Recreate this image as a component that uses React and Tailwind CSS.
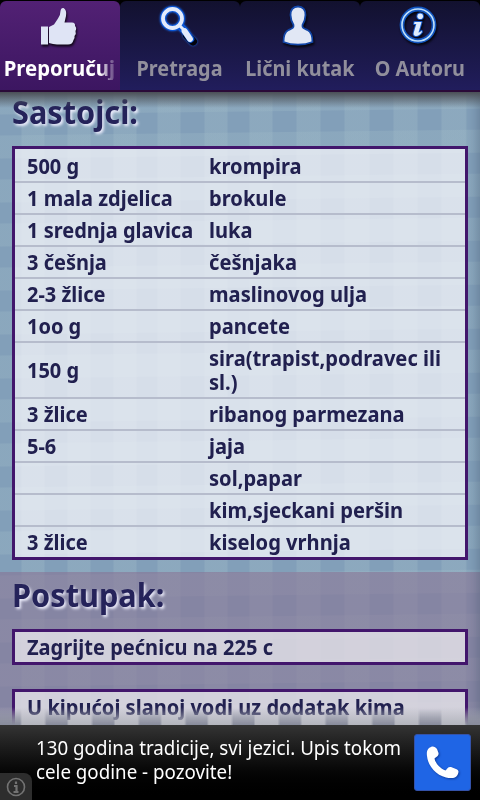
const ingredients = [
  ["500 g", "krompira"],
  ["1 mala zdjelica", "brokule"],
  ["1 srednja glavica", "luka"],
  ["3 češnja", "češnjaka"],
  ["2-3 žlice", "maslinovog ulja"],
  ["1oo g", "pancete"],
  ["150 g", "sira(trapist,podravec ili sl.)"],
  ["3 žlice", "ribanog parmezana"],
  ["5-6", "jaja"],
  ["", "sol,papar"],
  ["", "kim,sjeckani peršin"],
  ["3 žlice", "kiselog vrhnja"],
];

function ThumbIcon() {
  return (
    <svg className="h-[48px] w-[48px] drop-shadow-[1px_2px_1px_rgba(0,0,0,0.8)]" viewBox="0 0 48 48" fill="#dfe4f5">
      <path d="M5 26.500H12V44.500H5Z" />
      <path d="M13 27L18 24.500L22 18.500Q24.500 15 24.500 11Q25 7.500 27.500 8Q31 10 30 16L28.500 22.500H36Q39.500 22.500 39 26Q41 28 39.500 31Q40.500 33.500 38.500 36Q39 38.500 37.500 40Q36.500 44.500 32 44.500H21Q17 44 13 43Z" />
    </svg>
  );
}

function SearchIcon() {
  return (
    <svg className="h-[48px] w-[48px] -translate-x-[5px] drop-shadow-[0_0_1px_#1769ee]" viewBox="0 0 48 48" fill="none" strokeLinecap="round">
      <path d="M35 34L41 40" stroke="#02030c" strokeWidth="8" transform="translate(1 1.5)" />
      <circle cx="21.5" cy="18.5" r="9.5" stroke="#0b56d5" strokeWidth="6" />
      <path d="M29 26L32 29M34 31L39.500 39" stroke="#0b56d5" strokeWidth="7.500" />
      <circle cx="21.500" cy="18.500" r="9.500" stroke="#e3ebfb" strokeWidth="3.800" />
      <path d="M28.500 25.500L32 29" stroke="#e3ebfb" strokeWidth="3" />
      <path d="M33.500 31L39 39" stroke="#e3ebfb" strokeWidth="5.800" />
    </svg>
  );
}

function PersonIcon() {
  return (
    <svg className="h-[48px] w-[48px] drop-shadow-[1px_2px_1px_rgba(0,0,0,0.8)]" viewBox="0 0 48 48">
      <path d="M22 6.500C17 6.500 14.300 10 14.500 15C14.700 19 15.500 22 17.500 25C18 28 16 28.500 12.500 30C8.500 32 7.500 36 7.500 42C16 45.500 28 45.500 36.500 42C36.500 36 35.500 32 31.500 30C28 28.500 26 28 26.500 25C28.500 22 29.300 19 29.500 15C29.700 10 27 6.500 22 6.500Z" fill="#e1e7f5" stroke="#1246a8" strokeWidth="1.800" />
    </svg>
  );
}

function InfoIcon() {
  return (
    <svg className="h-[48px] w-[48px] drop-shadow-[1px_2px_1px_rgba(0,0,0,0.8)]" viewBox="0 0 48 48" fill="none">
      <circle cx="22" cy="25" r="16" stroke="#1255bf" strokeWidth="4.800" />
      <circle cx="22" cy="25" r="16" stroke="#bfe0fb" strokeWidth="1.600" />
      <g stroke="#1558c9" strokeWidth="2" strokeLinejoin="round" fill="#e0edff" paintOrder="stroke">
        <circle cx="24.200" cy="16.300" r="2.800" />
        <path d="M18.500 22H25.500L22.500 32.500Q23.500 33 25.500 30.800L26 32Q23 36.500 19.500 36Q17 35.500 17.800 32.500L20.300 24H18Z" />
      </g>
    </svg>
  );
}

const tabs = [
  { label: "Preporučuj", Icon: ThumbIcon },
  { label: "Pretraga", Icon: SearchIcon },
  { label: "Lični kutak", Icon: PersonIcon },
  { label: "O Autoru", Icon: InfoIcon },
];

function Tab({ label, Icon, active }) {
  return (
    <div
      className={
        active
          ? "flex w-[120px] flex-col items-center rounded-t-[6px] bg-linear-to-b from-[#522174] to-[#3c1661] text-white"
          : "flex w-[120px] flex-col items-center rounded-t-[6px] bg-linear-to-b from-[#12112f] to-[#211d5c] text-[#918f9c]"
      }
    >
      <div className="-mt-px flex h-[56px] items-start">
        <Icon />
      </div>
      <div
        className={
          active
            ? "-translate-x-px scale-x-[.97] text-[21px] leading-6 font-bold whitespace-nowrap mask-[linear-gradient(90deg,#000_86%,rgba(0,0,0,.35)_96%,rgba(0,0,0,.2))]"
            : "scale-x-[.945] text-[21px] leading-6 font-bold whitespace-nowrap"
        }
      >
        {label}
      </div>
    </div>
  );
}

function Heading({ children }) {
  return (
    <h2 className="w-[240px] origin-left scale-x-[.93] text-[33px] leading-[40px] font-bold text-[#25235a] [text-shadow:2px_2px_3px_rgba(240,240,255,.95)]">
      {children}
    </h2>
  );
}

function Step({ className, children }) {
  return (
    <div className={className}>
      <div className="w-[430px] origin-left scale-x-[.955] whitespace-nowrap">{children}</div>
    </div>
  );
}

export default function App() {
  return (
    <div className="relative flex h-[800px] w-[480px] flex-col overflow-hidden bg-black font-['Noto_Sans','Open_Sans',sans-serif]">
      <header className="flex h-[92px] shrink-0 border-b-2 border-[#2a0a38] pt-px">
        {tabs.map((t, i) => (
          <Tab key={t.label} {...t} active={i === 0} />
        ))}
      </header>
      <main className="relative h-[633px] shrink-0 overflow-hidden bg-[#829fb9] text-[21px] leading-6 font-bold text-[#21204f]">
        <div className="absolute inset-0 bg-[linear-gradient(90deg,transparent_21px,#a0bbc858_22px_44px,transparent_45px_67px,#a0bbc858_68px_90px,transparent_91px_113px,#a0bbc858_114px_136px,transparent_137px_157px,#a0bbc858_158px_180px,transparent_181px_204px,#a0bbc858_205px_227px,transparent_228px_249px,#a0bbc858_250px_272px,transparent_273px_296px,#a0bbc858_297px_320px,transparent_321px_344px,#a0bbc858_345px_369px,transparent_370px_393px,#a0bbc858_394px_417px,transparent_418px_441px,#a0bbc858_442px_466px,transparent_467px)]" />
        <div className="absolute inset-0 bg-[repeating-linear-gradient(179.3deg,#9ebac750_0px_22px,transparent_23px_43px,#9ebac750_44px)]" />
        <div className="absolute inset-x-0 top-[480px] bottom-0 bg-[#886f90]/54" />
        <div className="absolute inset-0 shadow-[inset_-10px_0_12px_-8px_#3d4f6870]" />
        <div className="relative flex flex-col px-3">
          <Heading>Sastojci:</Heading>
          <div className="mt-[14px] h-[414px] border-[3px] border-[#42166c] bg-[#fcfaff]/69 pt-[2px]">
            {ingredients.map(([amount, name], i) => (
              <div key={i} className="flex items-center border-b-2 border-[#b6bccc] px-3 py-[3px] last:border-b-0">
                <div className="w-[182px] shrink-0 origin-left scale-x-[.952] whitespace-nowrap">{amount}</div>
                <div className="w-[254px] shrink-0 origin-left scale-x-[.958]">{name}</div>
              </div>
            ))}
          </div>
          <div className="mt-[15px]">
            <Heading>Postupak:</Heading>
          </div>
          <Step className="mt-[14px] h-9 border-[3px] border-[#42166c] bg-[#f4f2f5]/69 px-3 pt-[3px]">Zagrijte pećnicu na 225 c</Step>
          <Step className="mt-6 h-[60px] border-[3px] border-[#42166c] bg-[#f4f2f5]/69 px-3 pt-[3px]">U kipućoj slanoj vodi uz dodatak kima</Step>
        </div>
        <div className="absolute inset-x-0 top-0 h-4 bg-linear-to-b from-[#4b4f56] to-transparent" />
        <div className="absolute inset-x-0 bottom-0 h-[18px] bg-linear-to-b from-transparent to-[#b3b5bd]" />
        <div className="absolute inset-x-0 bottom-0 h-4 bg-[repeating-linear-gradient(90deg,#6b708699_0px_20px,transparent_22px_44px,#6b708699_46.700px)] mask-[linear-gradient(transparent,#000)]" />
      </main>
      <footer className="flex min-h-0 flex-1 bg-linear-to-b from-[#343434] to-black">
        <div className="flex w-9 flex-col justify-end">
          <div className="flex h-[27px] w-8 items-center justify-center rounded-tr-[8px] bg-[#2d2d2d]">
            <svg width="20" height="20" viewBox="0 0 20 20" fill="none" stroke="#737373" strokeWidth="1.600">
              <circle cx="10" cy="10" r="8.500" />
              <path d="M10 4.500V7M8 9H10.500V15M7.500 15H12.500" strokeWidth="2.200" />
            </svg>
          </div>
        </div>
        <div className="w-[378px] pt-[11px]">
          <p className="w-[390px] origin-left scale-x-[.937] text-[20px] leading-6 whitespace-nowrap text-white">
            130 godina tradicije, svi jezici. Upis tokom
            <br />
            cele godine - pozovite!
          </p>
        </div>
        <div className="mt-[9px] h-[57px] w-[57px] rounded-[3px] border border-[#3452a8] bg-[#1f65e5]">
          <svg width="55" height="55" viewBox="0 0 55 55" fill="white" className="drop-shadow-[1px_1px_1px_rgba(0,20,80,.5)]">
            <path d="M14 13C17 10.500 20 11 22 14L23.500 18C24 21 21 22 19.500 23.500C20 28 26 34 30.500 35.500C32 34 33 31.500 36 32L41 34C44 35 44 37 42.500 40C40.500 43.500 36 43.500 31 42.500C21 40 13 31 12 21C11.500 17 12 15 14 13Z" />
          </svg>
        </div>
      </footer>
    </div>
  );
}
